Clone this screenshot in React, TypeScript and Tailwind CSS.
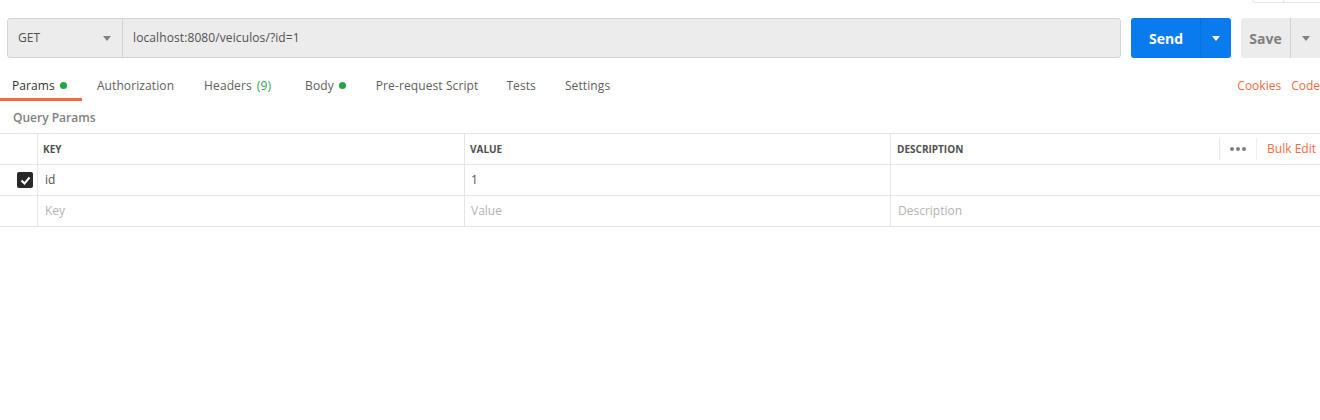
const tabs = [
  { label: 'Params', dot: true, active: true, pad: 'pl-[12px] pr-[15px]' },
  { label: 'Authorization', pad: 'pl-[15px] pr-[15px]' },
  { label: 'Headers', count: '(9)', pad: 'pl-[15px] pr-[19px]' },
  { label: 'Body', dot: true, pad: 'pl-[15px] pr-[15px]' },
  { label: 'Pre-request Script', pad: 'pl-[15px] pr-[13px]' },
  { label: 'Tests', pad: 'pl-[15px] pr-[14px]' },
  { label: 'Settings', pad: 'pl-[15px] pr-[15px]' },
]

const Caret = ({ className }: { className: string }) => (
  <svg width="8" height="5" viewBox="0 0 8 5" className={className}>
    <path d="M0 0h8L4 5z" fill="currentColor" />
  </svg>
)

export default function App() {
  return (
    <div className="relative h-[420px] w-[1320px] overflow-hidden bg-white font-['Open_Sans',sans-serif] text-[12px] text-[#505050]">
      {/* bit of the toolbar above, cut off */}
      <div className="absolute -top-[20px] left-[1252px] flex h-[23px] w-[80px] rounded-[3px] border border-[#e4e4e4]">
        <div className="w-[31px] border-r border-[#e4e4e4]" />
      </div>

      {/* request line */}
      <div className="flex pl-[7px] pt-[18px]">
        <div className="flex h-[40px] w-[1114px] shrink-0 rounded-[3px] border border-[#d4d4d4] bg-[#ececec]">
          <div className="flex w-[115px] items-center justify-between border-r border-[#d4d4d4] pl-[10px] pr-[11px]">
            <span className="text-[12px] text-[#505050]">GET</span>
            <Caret className="text-[#808080]" />
          </div>
          <div className="flex items-center pl-[10px] text-[12px] tracking-[0.1px] text-[#505050]">localhost:8080/veiculos/?id=1</div>
        </div>

        <div className="ml-[10px] flex h-[40px] w-[100px] shrink-0 rounded-[3px] bg-[#097bed] text-white">
          <div className="flex w-[69px] items-center justify-center pl-[1px] text-[14px] font-bold">Send</div>
          <div className="flex flex-1 items-center justify-center border-l border-[#0a6fd6]">
            <Caret className="text-white" />
          </div>
        </div>

        <div className="ml-[10px] flex h-[40px] w-[95px] shrink-0 rounded-[3px] bg-[#ececec] text-[#808080]">
          <div className="flex w-[49px] items-center justify-center text-[14px] font-bold">Save</div>
          <div className="flex w-[30px] items-center justify-center border-l border-[#d4d4d4]">
            <Caret className="text-[#808080]" />
          </div>
        </div>
      </div>

      {/* tabs */}
      <div className="mt-[12px] flex h-[31px] items-stretch justify-between">
        <div className="flex">
          {tabs.map((t) => (
            <div
              key={t.label}
              className={
                'flex items-center gap-[5px] tracking-[0.1px] ' +
                t.pad +
                ' ' +
                (t.active ? 'border-b-[3px] border-[#f26b3a] pt-[3px] text-[#333333]' : 'text-[#606060]')
              }
            >
              <span>{t.label}</span>
              {t.count && <span className="text-[#2aa752]">{t.count}</span>}
              {t.dot && <span className="h-[7px] w-[7px] rounded-full bg-[#22a548]" />}
            </div>
          ))}
        </div>
        <div className="flex items-center gap-[10px] text-[#f26b3a]">
          <span>Cookies</span>
          <span>Code</span>
        </div>
      </div>

      {/* query params */}
      <div className="pl-[13px] pt-[8px] pb-[6px] text-[12px] font-semibold text-[#808080]">Query Params</div>

      <div className="border-t border-[#e6e6e6]">
        <div className="flex h-[31px] border-b border-[#e6e6e6]">
          <div className="w-[38px] border-r border-[#e6e6e6]" />
          <div className="flex w-[427px] items-center border-r border-[#e6e6e6] pl-[5px] text-[10px] font-bold text-[#505050]">KEY</div>
          <div className="flex w-[426px] items-center border-r border-[#e6e6e6] pl-[5px] text-[10px] font-bold text-[#505050]">VALUE</div>
          <div className="flex flex-1 items-center pl-[6px] text-[10px] font-bold text-[#505050]">
            <span className="flex-1">DESCRIPTION</span>
            <div className="flex h-[22px] items-center border-l border-[#e6e6e6] px-[10px]">
              <span className="flex gap-[2px]">
                <span className="h-[4px] w-[4px] rounded-full bg-[#808080]" />
                <span className="h-[4px] w-[4px] rounded-full bg-[#808080]" />
                <span className="h-[4px] w-[4px] rounded-full bg-[#808080]" />
              </span>
            </div>
            <div className="flex h-[22px] items-center border-l border-[#eeeeee] pl-[10px] pr-[4px] text-[12px] font-normal text-[#f26b3a]">Bulk Edit</div>
          </div>
        </div>

        <div className="flex h-[31px] border-b border-[#e6e6e6]">
          <div className="flex w-[38px] items-center justify-end border-r border-[#e6e6e6] pr-[4px]">
            <div className="flex h-[16px] w-[16px] items-center justify-center rounded-[2px] bg-[#282828]">
              <svg width="11" height="9" viewBox="0 0 11 9">
                <path d="M1.5 4.5l3 3 5-6" stroke="white" strokeWidth="2" fill="none" />
              </svg>
            </div>
          </div>
          <div className="flex w-[427px] items-center border-r border-[#e6e6e6] pl-[7px] text-[#505050]">id</div>
          <div className="flex w-[426px] items-center border-r border-[#e6e6e6] pl-[6px] text-[#505050]">1</div>
          <div className="flex-1" />
        </div>

        <div className="flex h-[31px] border-b border-[#e6e6e6] text-[#b3b3b3]">
          <div className="w-[38px] border-r border-[#e6e6e6]" />
          <div className="flex w-[427px] items-center border-r border-[#e6e6e6] pl-[7px]">Key</div>
          <div className="flex w-[426px] items-center border-r border-[#e6e6e6] pl-[6px]">Value</div>
          <div className="flex flex-1 items-center pl-[7px]">Description</div>
        </div>
      </div>
    </div>
  )
}
